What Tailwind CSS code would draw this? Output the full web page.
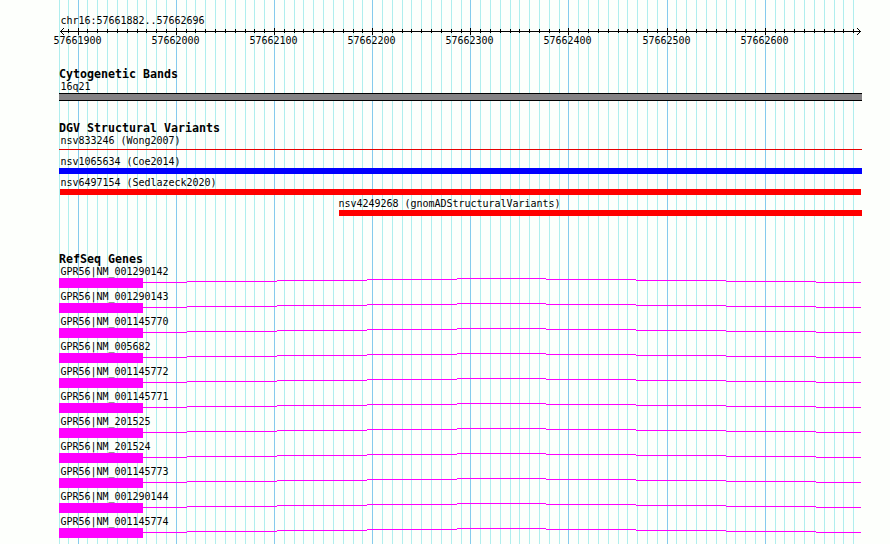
<!DOCTYPE html>
<html lang="en">
<head>
    <meta charset="UTF-8">
    <meta name="viewport" content="width=device-width, initial-scale=1.0">
    <title>chr16:57661882..57662696</title>
    <script src="https://cdn.jsdelivr.net/npm/@tailwindcss/browser@4"></script>
</head>
<body class="bg-[#fdfffc]">
    <div class="relative w-[890px] h-[544px] overflow-hidden text-black font-['DejaVu_Sans_Mono','Liberation_Mono',monospace] text-[10px] leading-[12px] tracking-[-0.02px] whitespace-nowrap">
        <!-- Grid lines behind all tracks -->
        <svg id="grid" class="absolute inset-0" width="890" height="544" shape-rendering="crispEdges"></svg>

        <main class="relative flex flex-col pl-[59px] pt-[15px]">
            <!-- Ruler -->
            <section class="h-[53px]">
                <div class="pl-[1.5px] h-3">chr16:57661882..57662696</div>
                <svg id="ruler" class="block" width="803" height="9" shape-rendering="crispEdges"></svg>
                <div id="labels" class="flex -ml-[5.5px] -mt-px"></div>
            </section>

            <!-- Cytogenetic Bands -->
            <section class="h-[54px]">
                <h2 class="font-bold text-[11.63px] leading-[12px] tracking-normal">Cytogenetic Bands</h2>
                <div class="pl-[1.5px] h-[13px] leading-[13px]">16q21</div>
                <div class="w-[803px] h-2 bg-[#848284] border-y border-black"></div>
            </section>

            <!-- DGV Structural Variants -->
            <section class="h-[131px]">
                <h2 class="font-bold text-[11.63px] leading-[12px] tracking-normal">DGV Structural Variants</h2>
                <div class="h-[21px]">
                    <div class="pl-[1.5px] h-[15px] leading-[13px]">nsv833246 (Wong2007)</div>
                    <div class="w-[803px] h-px bg-[#e60000]"></div>
                </div>
                <div class="h-[21px]">
                    <div class="pl-[1.5px] h-[13px] leading-[14px]">nsv1065634 (Coe2014)</div>
                    <div class="w-[803px] h-[6px] bg-[#0000ff]"></div>
                </div>
                <div class="h-[21px] pl-px">
                    <div class="pl-[0.5px] h-[13px] leading-[14px]">nsv6497154 (Sedlazeck2020)</div>
                    <div class="w-[801px] h-[6px] bg-[#ff0000]"></div>
                </div>
                <div class="h-[21px] pl-[280px]">
                    <div class="h-[13px] leading-[14px] -ml-[0.5px]">nsv4249268 (gnomADStructuralVariants)</div>
                    <div class="w-[523px] h-[6px] bg-[#ff0000]"></div>
                </div>
            </section>

            <!-- RefSeq Genes -->
            <section>
                <h2 class="font-bold text-[11.63px] leading-[12px] tracking-normal">RefSeq Genes</h2>
                <div id="genes"></div>
            </section>
        </main>
    </div>

    <script>
        const bpStep = 9.816;
        const origin = 78.18; // x of 57661900

        const tickX = k => k === -2 ? 59 : Math.floor(origin + k * bpStep);
        const rect = (x, y, w, h, fill) => `<rect x="${x}" y="${y}" width="${w}" height="${h}" fill="${fill}"/>`;

        // Grid and ruler ticks
        let grid = '';
        let ruler = rect(1, 4, 801, 1, '#000');
        for (let k = -2; k <= 79; k++) {
            const major = k % 10 === 0;
            grid += rect(tickX(k), 0, 1, 544, major ? '#84cbed' : '#afeeee');
            if (k > -2) {
                ruler += major ? rect(tickX(k) - 59, 1, 1, 7, '#000') : rect(tickX(k) - 59, 2, 1, 4, '#000');
            }
        }
        for (let i = 1; i <= 3; i++) {
            ruler += rect(1 + i, 4 - i, 1, 1, '#000') + rect(1 + i, 4 + i, 1, 1, '#000');
            ruler += rect(801 - i, 4 - i, 1, 1, '#000') + rect(801 - i, 4 + i, 1, 1, '#000');
        }
        document.getElementById('grid').innerHTML = grid;
        document.getElementById('ruler').innerHTML = ruler;

        // Position labels
        let labels = '';
        for (let i = 0; i < 8; i++) {
            const width = i < 7 ? tickX((i + 1) * 10) - tickX(i * 10) : 48;
            labels += `<span class="shrink-0" style="width:${width}px">${57661900 + i * 100}</span>`;
        }
        document.getElementById('labels').innerHTML = labels;

        // Genes: exon block followed by a stepped intron line
        const genes = [
            'NM_001290142', 'NM_001290143', 'NM_001145770', 'NM_005682',
            'NM_001145772', 'NM_001145771', 'NM_201525', 'NM_201524',
            'NM_001145773', 'NM_001290144', 'NM_001145774'
        ];
        const steps = [[84, 4], [128, 3], [218, 2], [308, 1], [398, 0], [487, 1], [577, 2], [667, 3], [757, 4], [802, 4]];
        let intron = '';
        for (let i = 0; i < steps.length - 1; i++) {
            intron += rect(steps[i][0], steps[i][1], steps[i + 1][0] - steps[i][0], 1, '#ff00ff');
        }
        document.getElementById('genes').innerHTML = genes.map(name => `
            <div class="h-[25px]">
                <div class="pl-[1.5px] h-[13px] leading-[13px]">GPR56|${name}</div>
                <svg class="block" width="803" height="10" shape-rendering="crispEdges">${rect(0, 0, 84, 10, '#ff00ff')}${intron}</svg>
            </div>`).join('');
    </script>
</body>
</html>
